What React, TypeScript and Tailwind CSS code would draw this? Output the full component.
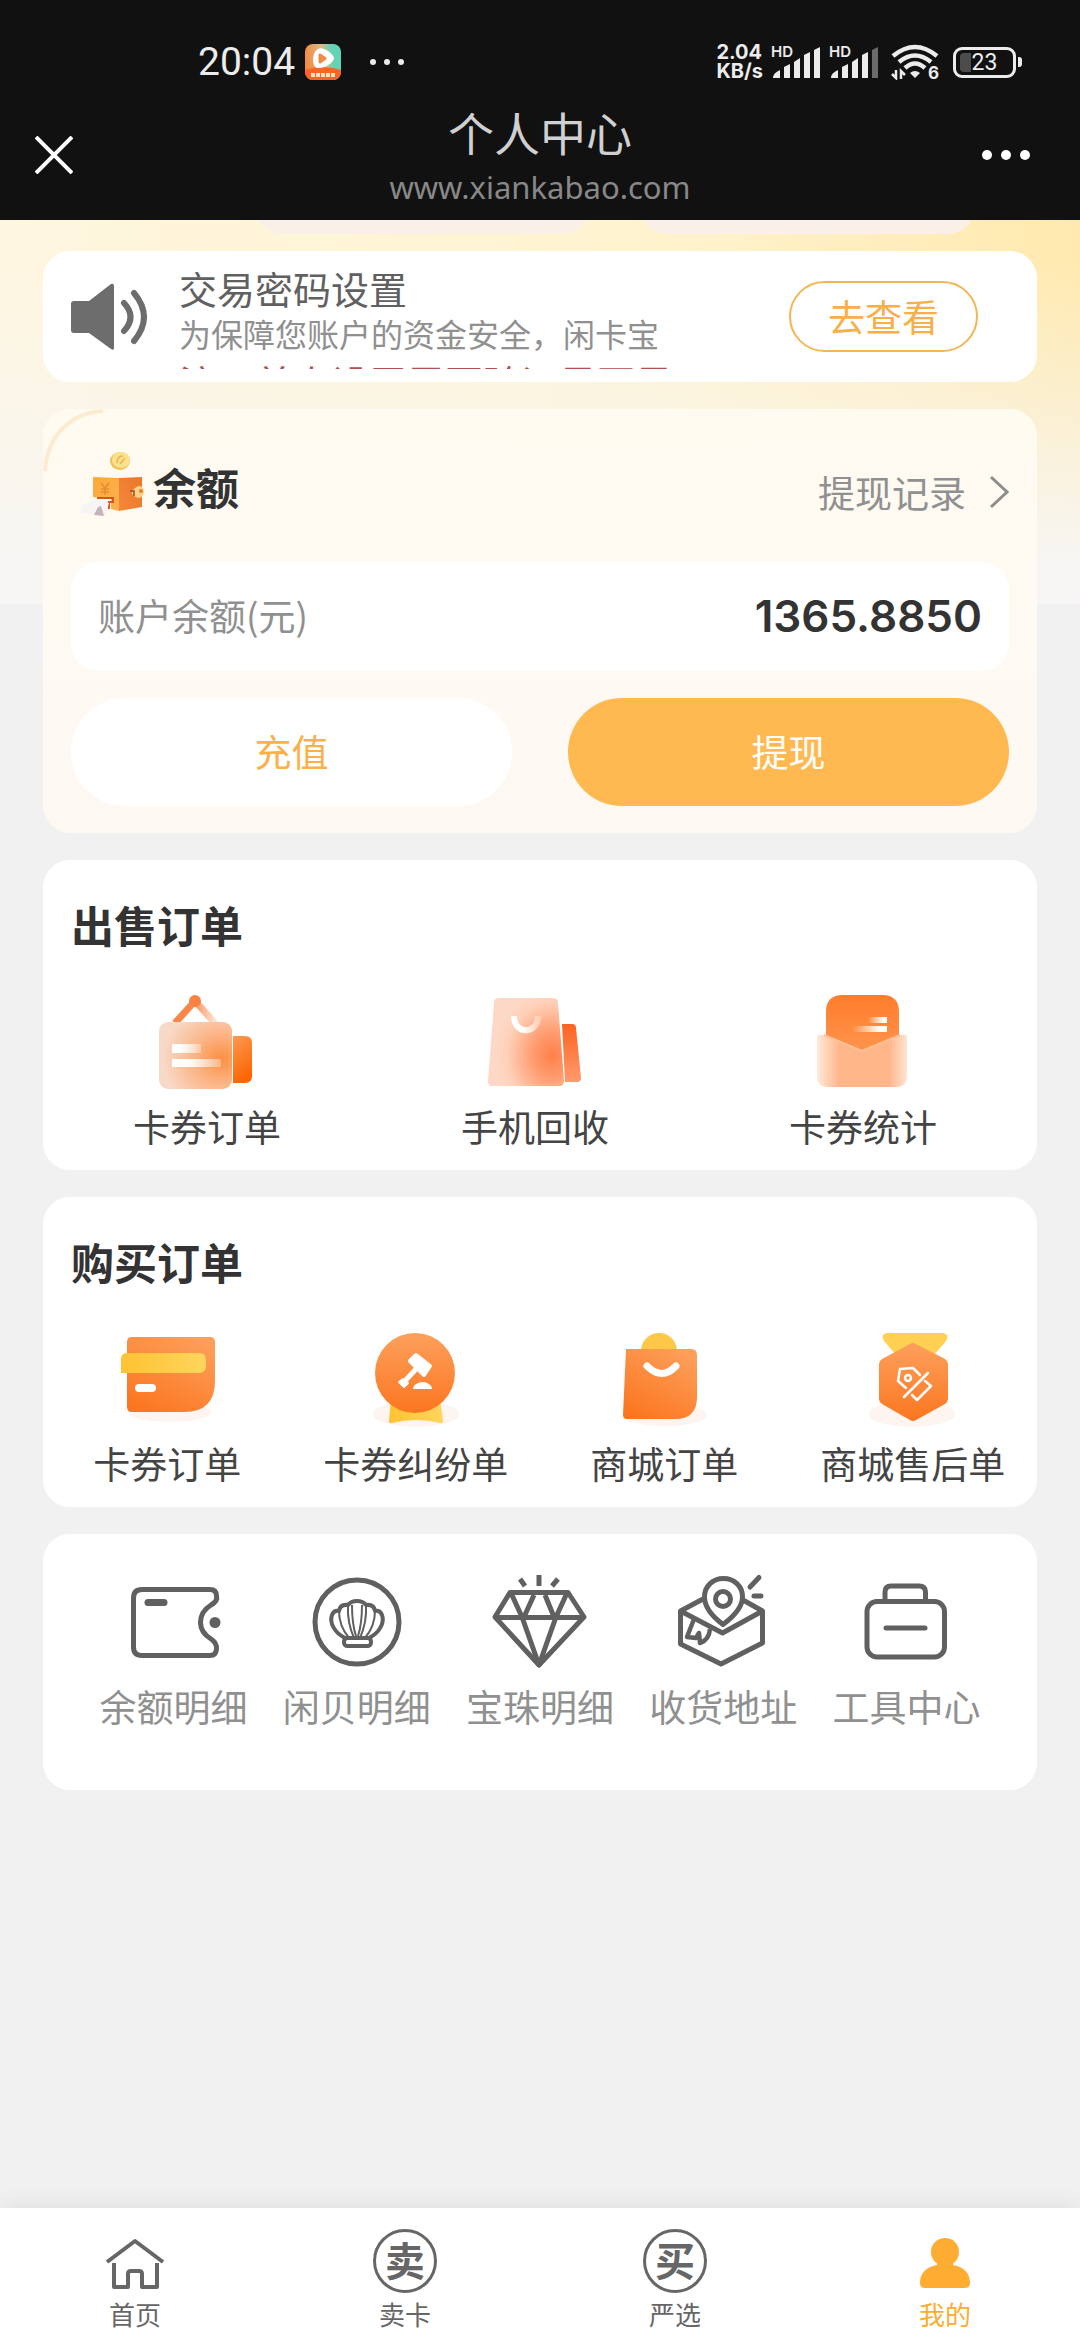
import type { ReactNode } from 'react';

type Entry = { label: string; icon: ReactNode };

const cjk = "font-['Noto_Sans_CJK_SC',sans-serif]";

/* ---------- status bar ---------- */

function AppBadge() {
  return (
    <svg className="size-9" viewBox="0 0 36 36" aria-hidden="true">
      <defs>
        <linearGradient id="badge" x1="0" y1="0.4" x2="1" y2="0.2">
          <stop offset="0" stopColor="#f58a3c" />
          <stop offset="0.5" stopColor="#d9b98a" />
          <stop offset="0.75" stopColor="#62d3b4" />
        </linearGradient>
      </defs>
      <rect width="36" height="36" rx="8" fill="url(#badge)" />
      <path d="M0 26Q18 20 36 26V28A8 8 0 0 1 28 36H8A8 8 0 0 1 0 28Z" fill="#fb6424" />
      <path d="M13 5C17 2 28 9 29 14C29 19 18 25 13 24C6 23 7 8 13 5Z" fill="#fff" />
      <path d="M15 11L20 14.500L15 18Z" fill="#f08a4a" stroke="#f08a4a" strokeWidth="3" strokeLinejoin="round" />
      <path d="M6 31H30" stroke="#ffe0c0" strokeWidth="4" strokeDasharray="4 1" />
    </svg>
  );
}

function Signal({ dim = false }: { dim?: boolean }) {
  return (
    <svg className="h-9 w-[50px]" viewBox="0 0 50 36" fill="#ececec" aria-label="HD" role="img">
      <text x="0" y="13" fontSize="15" fontWeight="600" fontFamily="Inter, sans-serif">HD</text>
      <path d="M2 34Q2 29 9 26V34Z" />
      <path d="M13 34V23L19 20V34Z" />
      <path d="M23 34V18L29 14V34Z" />
      <path d="M33 34V11L39 8V34Z" />
      <path d="M43 34V6L49 3V34Z" fill={dim ? '#6b6b6b' : '#ececec'} />
    </svg>
  );
}

function Wifi() {
  return (
    <svg className="h-9 w-12" viewBox="0 0 48 36" fill="none" stroke="#ececec" strokeWidth="4.500" aria-label="Wi-Fi 6" role="img">
      <path d="M2 12Q24 -6 46 12" />
      <path d="M8 18Q24 5 40 18" />
      <path d="M14 24Q24 15 34 24" />
      <path d="M19 29Q24 25 29 29L24 34Z" fill="#ececec" stroke="none" />
      <path d="M5 26V34L1 30M10 35V27L14 31" strokeWidth="2.500" />
      <text x="37" y="35" fill="#ececec" stroke="none" fontSize="17" fontWeight="700" fontFamily="Inter, sans-serif">6</text>
    </svg>
  );
}

function StatusBar() {
  return (
    <div className="flex h-[104px] items-center justify-between pt-5 pr-[58px] pl-[198px] text-[#ececec]">
      <div className="flex items-center">
        <span className="font-[Roboto,sans-serif] text-[39px] leading-none">20:04</span>
        <span className="ml-[10px]"><AppBadge /></span>
        <span className="ml-[29px] flex gap-2">
          <i className="size-[6px] rounded-full bg-[#ececec]" />
          <i className="size-[6px] rounded-full bg-[#ececec]" />
          <i className="size-[6px] rounded-full bg-[#ececec]" />
        </span>
      </div>
      <div className="flex items-center">
        <div className="mr-2 font-[Inter,sans-serif] text-[20px] leading-[19px] font-bold">
          <div>2.04</div>
          <div>KB/s</div>
        </div>
        <Signal />
        <span className="ml-2"><Signal dim /></span>
        <span className="ml-3"><Wifi /></span>
        <span className="ml-[14px] flex items-center">
          <span className="relative flex h-[31px] w-[63px] items-center justify-center rounded-[9px] border-[3px] border-[#ececec] font-[Roboto,sans-serif] text-[23px] leading-none">
            <i className="absolute left-[4px] h-[19px] w-[11px] rounded-l-[4px] bg-[#4c4c4c]" />
            <span className="relative">23</span>
          </span>
          <i className="ml-[2px] h-[10px] w-1 rounded-r-[3px] bg-[#ececec]" />
        </span>
      </div>
    </div>
  );
}

function Header() {
  return (
    <header className="bg-[#111111]">
      <StatusBar />
      <div className="grid h-[116px] grid-cols-[1fr_auto_1fr] items-start px-6">
        <button type="button" aria-label="关闭" className="flex h-[102px] w-[60px] items-center justify-center">
          <svg className="size-[38px]" viewBox="0 0 38 38" stroke="#fff" strokeWidth="4" aria-hidden="true">
            <path d="M1 1L37 37M37 1L1 37" />
          </svg>
        </button>
        <div className="text-center">
          <h1 className="text-[46px] leading-[54px] text-[#d0d0d0]">个人中心</h1>
          <p className="font-['Noto_Sans',sans-serif] text-[31px] leading-[58px] text-[#888888]">www.xiankabao.com</p>
        </div>
        <button type="button" aria-label="更多" className="mr-5 flex h-[102px] w-[60px] items-center justify-center gap-[9px] justify-self-end">
          <i className="size-[10px] rounded-full bg-white" />
          <i className="size-[10px] rounded-full bg-white" />
          <i className="size-[10px] rounded-full bg-white" />
        </button>
      </div>
    </header>
  );
}

/* ---------- notice ---------- */

function Notice() {
  return (
    <section className="flex items-center rounded-[27px] bg-white py-[13px] pr-[59px] pl-[27px]">
      <svg className="h-[68px] w-[80px] shrink-0" viewBox="0 0 80 68" fill="none" stroke="#6d6d6d" strokeWidth="6" strokeLinecap="round" aria-hidden="true">
        <path d="M4 18H19L41 1Q44 0 44 3V65Q44 68 41 66L19 50H4Q1 50 1 47V21Q1 18 4 18Z" fill="#6d6d6d" stroke="none" />
        <path d="M54 20Q67 34 54 48" />
        <path d="M64 10Q84 34 64 58" />
      </svg>
      <div className="ml-[29px] h-[105px] min-w-0 flex-1 overflow-hidden whitespace-nowrap">
        <h2 className="text-[38px] leading-[48px] text-[#606060]">交易密码设置</h2>
        <p className="text-[32px] leading-[42px] text-[#909090]">为保障您账户的资金安全，闲卡宝</p>
        <p className="text-[38px] leading-[56px] text-[#b0504f]">注：首次设置需要验证是否是</p>
      </div>
      <button type="button" className="h-[71px] w-[189px] shrink-0 rounded-full border-2 border-[#f3b655] text-[37px] leading-none text-[#f5b04a]">
        去查看
      </button>
    </section>
  );
}

/* ---------- balance ---------- */

function PurseIcon() {
  return (
    <svg className="h-[72px] w-[72px]" viewBox="0 0 72 72" aria-hidden="true">
      <defs>
        <linearGradient id="purseL" x1="0" y1="0" x2="1" y2="1">
          <stop offset="0" stopColor="#fda93a" />
          <stop offset="1" stopColor="#fbb04e" />
        </linearGradient>
        <linearGradient id="purseR" x1="1" y1="0" x2="0" y2="1">
          <stop offset="0" stopColor="#e9772c" />
          <stop offset="1" stopColor="#f6883a" />
        </linearGradient>
      </defs>
      <ellipse cx="43" cy="11" rx="10" ry="9" fill="#f0bf55" />
      <ellipse cx="44" cy="10" rx="9" ry="8" fill="#fde18c" />
      <path d="M40 13Q40 6 46 6M43 14L48 8" stroke="#e3b45a" strokeWidth="1.500" fill="none" />
      <path d="M16 27L42 28V61L34 59V49L16 47Z" fill="url(#purseL)" />
      <path d="M42 28L65 27V57L42 61Z" fill="url(#purseR)" />
      <path d="M24 33L28 38L32 33M28 38V45M24 39H32M24 42H32" stroke="#e58a35" strokeWidth="1.500" fill="none" />
      <path d="M20 48H36V52H32V59" stroke="#d9541f" strokeWidth="2" fill="none" />
      <path d="M55 41Q62 33 66 38Q69 45 63 48Q58 48 55 44Z" fill="#fbd08a" />
      <circle cx="64" cy="41" r="2" fill="#d9862f" />
      <path d="M53 41H57V46" stroke="#9a4a1d" strokeWidth="1.500" fill="none" />
      <path d="M5 56L17 50L32 53L28 66L4 63Z" fill="#f7f4f6" />
      <path d="M17 65L21 57L24 56L27 66Z" fill="#c3b4ba" />
    </svg>
  );
}

function Balance() {
  return (
    <section className="relative rounded-[27px] bg-linear-to-b from-[#fffbf1] to-[#fef8f3] px-7 pb-[27px]">
      <svg className="absolute top-0 left-0 size-[64px]" viewBox="0 0 64 64" fill="none" aria-hidden="true">
        <path d="M2 62C4 28 26 4 60 2" stroke="#fdebcf" strokeWidth="4" />
      </svg>
      <div className="flex h-[153px] items-center justify-between">
        <div className="flex items-center">
          <span className="ml-[6px]"><PurseIcon /></span>
          <h2 className="ml-1 text-[43px] leading-[60px] font-bold text-[#333333]">余额</h2>
        </div>
        <a href="#records" className="flex items-center pt-3 text-[37px] leading-[52px] text-[#909090]">
          提现记录
          <svg className="ml-[23px] h-[34px] w-5" viewBox="0 0 20 34" fill="none" stroke="#8c8c8c" strokeWidth="3" aria-hidden="true">
            <path d="M2 2L18 17L2 32" />
          </svg>
        </a>
      </div>
      <div className="flex h-[109px] items-center justify-between rounded-[27px] bg-white px-[27px] pb-[2px]">
        <span className="text-[37px] text-[#909090]">账户余额(元)</span>
        <span className="font-[Inter,sans-serif] text-[44px] font-semibold text-[#333333]">1365.8850</span>
      </div>
      <div className="mt-[27px] grid grid-cols-2 gap-14">
        <button type="button" className="h-[108px] rounded-full bg-white text-[37px] text-[#fbb04a]">充值</button>
        <button type="button" className="h-[108px] rounded-full bg-[#ffb950] text-[37px] text-white">提现</button>
      </div>
    </section>
  );
}

/* ---------- sell icons ---------- */

const iconBox = 'size-[108px]';

const sellEntries: Entry[] = [
  {
    label: '卡券订单',
    icon: (
      <svg className={iconBox} viewBox="0 0 108 108" aria-hidden="true">
        <defs>
          <radialGradient id="s1body" cx="0.85" cy="0.55" r="0.8">
            <stop offset="0" stopColor="#fb8f42" />
            <stop offset="0.45" stopColor="#fcb384" />
            <stop offset="1" stopColor="#f8d9c8" />
          </radialGradient>
          <linearGradient id="s1tab" x1="0" y1="0" x2="0.3" y2="1">
            <stop offset="0" stopColor="#fb9a52" />
            <stop offset="1" stopColor="#fd6503" />
          </linearGradient>
          <linearGradient id="s1line" x1="0" x2="1">
            <stop offset="0.3" stopColor="#fff" />
            <stop offset="1" stopColor="#fff" stopOpacity="0.3" />
          </linearGradient>
          <linearGradient id="s1strap" x1="0" x2="1">
            <stop offset="0.4" stopColor="#f9874a" />
            <stop offset="1" stopColor="#fde3d3" />
          </linearGradient>
        </defs>
        <path d="M22 35L42 13L62 35" fill="none" stroke="url(#s1strap)" strokeWidth="7" strokeLinejoin="round" />
        <circle cx="42" cy="13" r="6" fill="#fa8243" />
        <path d="M80 48H92Q99 48 99 55V88Q99 95 92 95H80Z" fill="url(#s1tab)" />
        <rect x="6" y="34" width="73" height="67" rx="9" fill="url(#s1body)" />
        <rect x="19" y="56" width="29" height="9" fill="url(#s1line)" />
        <rect x="19" y="71" width="49" height="8" fill="url(#s1line)" />
      </svg>
    ),
  },
  {
    label: '手机回收',
    icon: (
      <svg className={iconBox} viewBox="0 0 108 108" aria-hidden="true">
        <defs>
          <radialGradient id="s2body" cx="0.85" cy="0.65" r="0.75">
            <stop offset="0" stopColor="#ff8048" />
            <stop offset="0.35" stopColor="#ff9c70" />
            <stop offset="0.8" stopColor="#ffd0b8" />
            <stop offset="1" stopColor="#fdd8c6" />
          </radialGradient>
          <linearGradient id="s2tab" x1="0" y1="0" x2="0" y2="1">
            <stop offset="0" stopColor="#fb6420" />
            <stop offset="1" stopColor="#ff9a6e" />
          </linearGradient>
          <linearGradient id="s2smile" x1="0" x2="1">
            <stop offset="0.4" stopColor="#fff" />
            <stop offset="1" stopColor="#ffd0b6" />
          </linearGradient>
        </defs>
        <path d="M81 36H91Q95 36 95 40L100 90Q100 94 96 94H84Z" fill="url(#s2tab)" />
        <path d="M18 10H72Q77 10 77 15L83 93Q83 98 78 98H11Q7 98 7 93L13 15Q13 10 18 10Z" fill="url(#s2body)" />
        <path d="M33 28C33 47 57 47 57 28" fill="none" stroke="url(#s2smile)" strokeWidth="6" />
      </svg>
    ),
  },
  {
    label: '卡券统计',
    icon: (
      <svg className={iconBox} viewBox="0 0 108 108" aria-hidden="true">
        <defs>
          <linearGradient id="s3card" x1="0" y1="0" x2="0" y2="1">
            <stop offset="0" stopColor="#ff7d2a" />
            <stop offset="1" stopColor="#ff9651" />
          </linearGradient>
          <linearGradient id="s3env" x1="0" x2="1">
            <stop offset="0" stopColor="#ffe9dc" />
            <stop offset="0.25" stopColor="#ffb689" />
            <stop offset="0.8" stopColor="#ffb689" />
            <stop offset="1" stopColor="#ffe4d4" />
          </linearGradient>
          <linearGradient id="s3line" x1="0" x2="1">
            <stop offset="0" stopColor="#fff" stopOpacity="0" />
            <stop offset="0.8" stopColor="#fff" />
          </linearGradient>
        </defs>
        <path d="M17 70V24Q17 7 34 7H73Q90 7 90 24V70Z" fill="url(#s3card)" />
        <rect x="59" y="29" width="19" height="6" fill="url(#s3line)" />
        <rect x="43" y="38" width="35" height="6" fill="url(#s3line)" />
        <path d="M8 50Q8 45 14 47L53 63L92 47Q98 45 98 50V88Q98 99 87 99H19Q8 99 8 88Z" fill="url(#s3env)" />
        <path d="M15 47L53 63L91 47" fill="none" stroke="#ffc196" strokeWidth="2" />
      </svg>
    ),
  },
];

/* ---------- purchase icons ---------- */

const buyEntries: Entry[] = [
  {
    label: '卡券订单',
    icon: (
      <svg className={iconBox} viewBox="0 0 108 108" aria-hidden="true">
        <defs>
          <linearGradient id="orange" x1="0.2" y1="1" x2="0.8" y2="0">
            <stop offset="0" stopColor="#fb7620" />
            <stop offset="1" stopColor="#fd9f5a" />
          </linearGradient>
          <linearGradient id="yellow" x1="0" x2="1">
            <stop offset="0" stopColor="#ffc233" />
            <stop offset="1" stopColor="#ffd55c" />
          </linearGradient>
        </defs>
        <ellipse cx="57" cy="87" rx="42" ry="10" fill="#fef5f1" />
        <path d="M19 12H97Q102 12 102 17V56Q102 87 71 87H19Q14 87 14 82V17Q14 12 19 12Z" fill="url(#orange)" />
        <path d="M14 28H86Q93 28 93 35V41Q93 48 86 48H8V34Q8 28 14 28Z" fill="url(#yellow)" />
        <rect x="22" y="59" width="21" height="8" rx="4" fill="#fff" />
      </svg>
    ),
  },
  {
    label: '卡券纠纷单',
    icon: (
      <svg className={iconBox} viewBox="0 0 108 108" aria-hidden="true">
        <defs>
          <linearGradient id="orangeV" x1="0" y1="1" x2="0" y2="0">
            <stop offset="0" stopColor="#fb7620" />
            <stop offset="1" stopColor="#fda05c" />
          </linearGradient>
        </defs>
        <ellipse cx="54" cy="89" rx="43" ry="13" fill="#fef5f1" />
        <path d="M29 74H78L81 96Q81 99 78 98Q54 92 30 98Q27 99 27 96Z" fill="url(#yellow)" />
        <circle cx="53" cy="48" r="40" fill="url(#orangeV)" />
        <path d="M48 36L54 30L68 41L62 50Z" fill="#fff" stroke="#fff" strokeWidth="4" strokeLinejoin="round" />
        <path d="M54 44L42 57" stroke="#fff" strokeWidth="5" />
        <path d="M37 57L41 54L46 58L42 62Z" fill="#fff" stroke="#fff" strokeWidth="2" strokeLinejoin="round" />
        <path d="M51 64Q51 60 56 58Q61 56 65 58Q70 60 70 64Z" fill="#fff" />
      </svg>
    ),
  },
  {
    label: '商城订单',
    icon: (
      <svg className={iconBox} viewBox="0 0 108 108" aria-hidden="true">
        <ellipse cx="55" cy="90" rx="42" ry="11" fill="#fef5f1" />
        <circle cx="49" cy="26" r="18" fill="#fdc748" />
        <path d="M16 24H81Q87 24 87 30V72Q87 94 65 94H17Q13 94 13 90Z" fill="url(#orange)" />
        <path d="M37 41Q52 56 66 41" fill="none" stroke="#fff" strokeWidth="7" strokeLinecap="round" />
      </svg>
    ),
  },
  {
    label: '商城售后单',
    icon: (
      <svg className={iconBox} viewBox="0 0 108 108" aria-hidden="true">
        <ellipse cx="53" cy="89" rx="43" ry="13" fill="#fef5f1" />
        <path d="M28 8H84Q91 9 87 16L74 31H38L25 16Q21 9 28 8Z" fill="#ffd051" />
        <path d="M51 19Q54 17 57 19L86 34Q89 36 89 39V74Q89 77 86 79L57 95Q54 97 51 95L23 79Q20 77 20 74V39Q20 36 23 34Z" fill="url(#orangeV)" />
        <g fill="none" stroke="#fff" strokeWidth="2.500" strokeLinecap="round" strokeLinejoin="round">
          <path d="M61 50L54 43L41 44L39 56L47 63" />
          <circle cx="49" cy="53" r="3" />
          <path d="M69 48L45 72" />
          <path d="M66 56L72 61L58 75L53 70" />
        </g>
      </svg>
    ),
  },
];

/* ---------- tool icons ---------- */

function LineIcon({ children }: { children: ReactNode }) {
  return (
    <svg className={iconBox} viewBox="0 0 108 108" fill="none" stroke="#606060" strokeWidth="5" strokeLinejoin="round" aria-hidden="true">
      {children}
    </svg>
  );
}

const toolEntries: Entry[] = [
  {
    label: '余额明细',
    icon: (
      <LineIcon>
        <path d="M22 21.500H90Q96.500 21.500 96.500 28Q98 33 91 37C83 42 80.500 48 80.500 54.500C80.500 61 83 66 91 71Q97 75 96.500 81Q96 87.500 90 87.500H22Q13.500 87.500 13.500 79V30Q13.500 21.500 22 21.500Z" />
        <path d="M28 34.500H44" strokeWidth="7" strokeLinecap="round" />
        <circle cx="95" cy="54.500" r="5.500" fill="#606060" stroke="none" />
      </LineIcon>
    ),
  },
  {
    label: '闲贝明细',
    icon: (
      <LineIcon>
        <circle cx="54" cy="54" r="42" />
        <g strokeWidth="4">
          <path d="M42 70C32 65 26 55 29 47Q31 42 36 43Q37 36 45 37Q48 33 54 33Q60 33 63 37Q71 36 72 43Q77 42 79 47C82 55 76 65 66 70Z" />
          <path d="M36 43Q36 58 46 70M45 37Q44 54 51 70M63 37Q64 54 57 70M72 43Q72 58 62 70" strokeWidth="2" />
          <path d="M49 37Q49 56 53 68M59 37Q59 56 55 68" strokeWidth="2" />
          <rect x="41" y="70" width="27" height="8" rx="3.500" fill="#fff" />
        </g>
      </LineIcon>
    ),
  },
  {
    label: '宝珠明细',
    icon: (
      <LineIcon>
        <path d="M24 24.500H82L98 49L53 97L9 49Z" />
        <path d="M9 49.500H98" />
        <path d="M25 25L36 49L53 97L70 49L81 25" />
        <path d="M48 27L38 49M59 27L68 49" />
        <path d="M34 11L39 18M53 7V18M72 11L66 18" />
      </LineIcon>
    ),
  },
  {
    label: '收货地址',
    icon: (
      <LineIcon>
        <path d="M34 31L11.500 43V76L52 96L93.500 75V43L74 32" />
        <path d="M11.500 43L53.500 65L93.500 43" />
        <path d="M54 56.500C44 49 35.500 40 35.500 29C35.500 18 44 10.500 54.500 10.500C65 10.500 73.500 18 73.500 29C73.500 40 64 49 54 56.500Z" fill="#fff" />
        <circle cx="54" cy="31" r="7.500" />
        <path d="M25 51L18 69L27 70L30 65L31 75Q40 72 41 61" strokeWidth="4.500" />
        <path d="M81 19L90 9.500M85 28H92" strokeLinecap="round" />
      </LineIcon>
    ),
  },
  {
    label: '工具中心',
    icon: (
      <LineIcon>
        <rect x="15" y="33.500" width="77.500" height="55.500" rx="10" />
        <path d="M33 33V24Q33 18 39 18H67Q73.500 18 73.500 24V33" />
        <path d="M34 60H73" strokeLinecap="round" />
      </LineIcon>
    ),
  },
];

function EntryLink({ entry, tone }: { entry: Entry; tone: string }) {
  return (
    <a href={`#${entry.label}`} className={`flex flex-col items-center whitespace-nowrap ${tone}`}>
      {entry.icon}
      <span className="mt-1 text-[37px] leading-[52px]">{entry.label}</span>
    </a>
  );
}

/* ---------- bottom navigation ---------- */

function Seal({ children }: { children: ReactNode }) {
  return (
    <span className="flex size-[64px] items-center justify-center rounded-full border-[3px] border-[#666666] pb-1 text-[40px] leading-none font-bold" aria-hidden="true">
      {children}
    </span>
  );
}

const tabs: { label: string; icon: ReactNode; active?: boolean }[] = [
  {
    label: '首页',
    icon: (
      <svg className="size-[64px]" viewBox="0 0 64 64" fill="none" stroke="#666666" strokeWidth="4" strokeLinejoin="round" aria-hidden="true">
        <path d="M4 33L32 12L60 33" />
        <path d="M11 34V58H25V45Q25 42 28 42H36Q39 42 39 45V58H54V34" />
      </svg>
    ),
  },
  { label: '卖卡', icon: <Seal>卖</Seal> },
  { label: '严选', icon: <Seal>买</Seal> },
  {
    label: '我的',
    icon: (
      <svg className="size-[64px]" viewBox="0 0 64 64" fill="#ffac33" aria-hidden="true">
        <ellipse cx="32" cy="23" rx="14" ry="14" />
        <path d="M24 33H40V36C52 38 57 45 57 54Q57 59 52 59H12Q7 59 7 54C7 45 12 38 24 36Z" />
      </svg>
    ),
    active: true,
  },
];

function TabBar() {
  return (
    <nav className="mt-auto grid grid-cols-4 bg-white pt-[21px] pb-[6px] shadow-[0_-6px_18px_rgba(0,0,0,0.06)]">
      {tabs.map((t) => (
        <a
          key={t.label}
          href={`#${t.label}`}
          className={`flex flex-col items-center text-[26px] leading-[41px] ${t.active ? 'text-[#ffac33]' : 'text-[#666666]'}`}
        >
          {t.icon}
          <span>{t.label}</span>
        </a>
      ))}
    </nav>
  );
}

export default function App() {
  return (
    <div className={`flex min-h-screen flex-col bg-[#f1f1f1] ${cjk}`}>
      <Header />
      <main className="relative px-[43px]">
        <div
          className="absolute inset-x-0 top-0 h-[384px] bg-[linear-gradient(to_bottom,rgba(247,246,244,0)_10%,#f7f6f4_90%),linear-gradient(to_right,#fef6e0,#fff3cf_60%,#ffe9ae)]"
          aria-hidden="true"
        />
        <div className="relative">
          <div className="flex h-[14px] items-end gap-[50px] overflow-hidden pr-[62px] pl-[212px]" aria-hidden="true">
            <i className="h-[60px] flex-1 rounded-[27px] bg-[#faf0e8]" />
            <i className="h-[60px] flex-1 rounded-[27px] bg-[#faf0e8]" />
          </div>
          <div className="mt-[17px] flex flex-col gap-[27px]">
            <Notice />
            <Balance />
            <section className="rounded-[27px] bg-white pb-[18px]">
              <h2 className="px-7 pt-[34px] text-[43px] leading-[60px] font-bold text-[#333333]">出售订单</h2>
              <div className="mt-[34px] mr-[10px] grid grid-cols-3">
                {sellEntries.map((e) => <EntryLink key={e.label} entry={e} tone="text-[#444444]" />)}
              </div>
            </section>
            <section className="rounded-[27px] bg-white pb-[18px]">
              <h2 className="px-7 pt-[34px] text-[43px] leading-[60px] font-bold text-[#333333]">购买订单</h2>
              <div className="mt-[34px] grid grid-cols-4">
                {buyEntries.map((e) => <EntryLink key={e.label} entry={e} tone="text-[#444444]" />)}
              </div>
            </section>
            <section className="grid grid-cols-5 rounded-[27px] bg-white px-[39px] pt-[34px] pb-[58px]">
              {toolEntries.map((e) => <EntryLink key={e.label} entry={e} tone="text-[#909090]" />)}
            </section>
          </div>
        </div>
      </main>
      <TabBar />
    </div>
  );
}
